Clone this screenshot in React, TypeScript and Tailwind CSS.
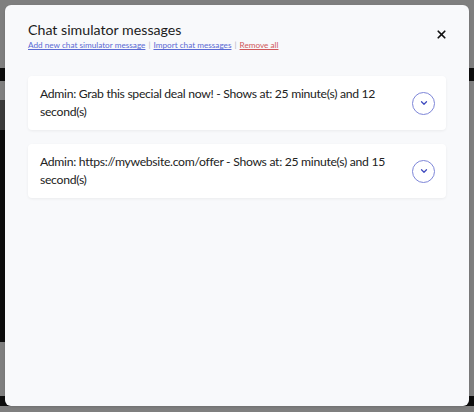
import { ChevronDown, X } from "lucide-react";

const messages = [
  "Admin: Grab this special deal now! - Shows at: 25 minute(s) and 12 second(s)",
  "Admin: https://mywebsite.com/offer - Shows at: 25 minute(s) and 15 second(s)",
];

export default function App() {
  return (
    <div className="relative h-[412px] w-[474px] overflow-hidden bg-[#7f7f7f] font-['Lato',sans-serif]">
      {/* page behind the overlay */}
      <div className="absolute inset-x-0 top-[68px] h-[13px] bg-[#0d0d0d]" />
      <div className="absolute left-0 top-[100px] h-[30px] w-[6px] bg-[#3a3a3a]" />
      <div className="absolute left-0 top-[130px] h-[212px] w-[6px] bg-[#0d0d0d]" />
      <div className="absolute inset-x-0 top-[396px] h-[10px] bg-[#0d0d0d]" />

      <div className="absolute left-[5px] top-[5px] flex h-[401px] w-[464px] flex-col rounded-md bg-[#f8f9fb] px-[23px] pt-[15px] shadow">
        <div className="flex items-start justify-between">
          <div>
            <h2 className="text-[14.2px] leading-[20px] text-[#1c1c1c]">Chat simulator messages</h2>
            <div className="text-[8.2px] leading-[10px] text-[#b0b4c0]">
              <a className="text-[#5a6ad4] underline">Add new chat simulator message</a>
              <span className="mx-[3px]">|</span>
              <a className="text-[#5a6ad4] underline">Import chat messages</a>
              <span className="mx-[3px]">|</span>
              <a className="text-[#d0585a] underline">Remove all</a>
            </div>
          </div>
          <button className="mr-[-2px] mt-[8px] text-[#111]">
            <X className="h-[13px] w-[13px]" strokeWidth={3.2} />
          </button>
        </div>

        <div className="mt-[26px] flex flex-col gap-[14px]">
          {messages.map((m) => (
            <div
              key={m}
              className="flex items-center justify-between rounded-[4px] bg-white py-[9px] pl-[12px] pr-[11px] shadow-[0_1px_3px_rgba(0,0,0,0.06)]"
            >
              <p className="w-[345px] text-[12.2px] leading-[18px] tracking-[-0.3px] text-[#222]">{m}</p>
              <span className="flex h-[23px] w-[23px] items-center justify-center rounded-full border border-[#7e86d8] text-[#3f4bbf]">
                <ChevronDown className="h-[10px] w-[10px]" strokeWidth={3} />
              </span>
            </div>
          ))}
        </div>
      </div>
    </div>
  );
}
